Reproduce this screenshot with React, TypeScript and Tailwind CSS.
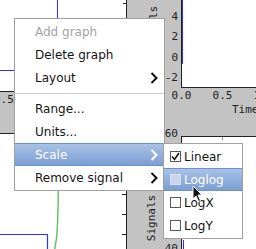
import React from "react";

function Chevron({ white }: { white?: boolean }) {
    return (
        <svg width="8" height="12" viewBox="0 0 8 12" className="ml-auto mr-[6px]">
            <polyline points="1.5,1 6.5,6 1.5,11" fill="none" stroke={white ? "#ffffff" : "#111111"} strokeWidth="2" />
        </svg>
    );
}

function Item({ label, disabled, active, sub }: { label: string; disabled?: boolean; active?: boolean; sub?: boolean }) {
    return (
        <div
            className={
                "h-[23px] flex items-center pl-[20px] " +
                (active
                    ? "bg-gradient-to-b from-[#a9c2e6] to-[#7b9fd4] text-white border-y border-[#6d92c9]"
                    : disabled
                        ? "text-[#a3a3a3]"
                        : "text-[#141414]")
            }
        >
            {label}
            {sub && <Chevron white={active} />}
        </div>
    );
}

function Check({ label, checked, active }: { label: string; checked?: boolean; active?: boolean }) {
    return (
        <div
            className={
                "h-[23px] flex items-center pl-[6px] gap-[3px] " +
                (active
                    ? "bg-gradient-to-b from-[#a9c2e6] to-[#7b9fd4] text-white border-y border-[#6d92c9]"
                    : "text-[#141414]")
            }
        >
            <div
                className={
                    "w-[11px] h-[11px] border flex items-center justify-center " +
                    (active ? "border-[#d8e2f2] bg-[#c9d6ec]" : "border-[#5a5a5a] bg-white")
                }
            >
                {checked && (
                    <svg width="9" height="9" viewBox="0 0 9 9">
                        <polyline points="1,4.5 3.5,7.5 8,1" fill="none" stroke="#111" strokeWidth="1.6" />
                    </svg>
                )}
            </div>
            <span>{label}</span>
        </div>
    );
}

function YLabels({ values }: { values: string[] }) {
    return (
        <div className="flex flex-col items-end pr-[3px] pt-[7px]">
            {values.map((v) => (
                <div key={v} className="h-[23px] flex items-center">
                    <span>{v}</span>
                </div>
            ))}
        </div>
    );
}

export default function App() {
    return (
        <div className="relative w-[256px] h-[249px] overflow-hidden bg-[#c3c3c3] flex font-['DejaVu_Sans_Mono',monospace] text-[11px] leading-[14px] text-[#222]">
            {/* left column of graphs */}
            <div className="w-[127px] flex flex-col">
                <div className="h-[92px] bg-white border-r border-b border-[#222]">
                    <svg width="126" height="91">
                        <line x1="57.5" y1="0" x2="57.5" y2="30" stroke="#2b2bff" />
                        <line x1="0" y1="70.5" x2="30" y2="70.5" stroke="#2b2bff" />
                        <line x1="123" y1="3.5" x2="126" y2="3.5" stroke="#222" />
                    </svg>
                </div>
                <div className="h-[42px] pt-[1px] ml-[-6px]">0.5</div>
                <div className="flex-1 bg-white border-t border-r border-[#222]">
                    <svg width="126" height="115">
                        <polyline points="0,100.5 47.5,100.5 47.5,120" fill="none" stroke="#3030ff" strokeWidth="1.2" />
                        <path d="M58.5,40 C58.2,80 57.6,95 56.5,104 C55.8,110 55,113 54,120" fill="none" stroke="#5fbf5f" strokeWidth="1.4" />
                        <line x1="122" y1="60.5" x2="126" y2="60.5" stroke="#222" />
                        <line x1="122" y1="80.5" x2="126" y2="80.5" stroke="#222" />
                        <line x1="122" y1="100.5" x2="126" y2="100.5" stroke="#222" />
                    </svg>
                </div>
            </div>

            {/* right column of graphs */}
            <div className="flex-1 flex flex-col">
                <div className="h-[88px] flex">
                    <div className="relative w-[54px] flex justify-end">
                        <span className="absolute left-[3px] top-[22px] w-[47px] -rotate-90 text-center">Signals</span>
                        <YLabels values={["4", "2", "0", "-2"]} />
                    </div>
                    <div className="flex-1 bg-white border-l border-b border-[#222]">
                        <div className="w-[1px] h-[64px] bg-[#2b2bff]" />
                    </div>
                </div>
                <div className="h-[48px] flex flex-col">
                    <div className="flex pl-[34px] pt-[1px]">
                        <span className="w-[41px] text-center">0.0</span>
                        <span className="w-[41px] text-center">0.5</span>
                        <span className="w-[41px] text-center">1.0</span>
                    </div>
                    <div className="pl-[105px] whitespace-nowrap">Time</div>
                    <div className="w-[51px] text-right mt-[10px]">60</div>
                </div>
                <div className="flex-1 flex">
                    <div className="relative w-[54px]">
                        <span className="absolute left-[1px] top-[75px] w-[47px] -rotate-90 text-center">Signals</span>
                        <span className="absolute right-[3px] top-[106px]">40</span>
                    </div>
                    <div className="flex-1 flex flex-col bg-white border-l border-t border-[#222]">
                        <div className="ml-[40px] w-[1px] h-[3px] bg-[#999]" />
                        <div className="ml-[1px] mt-[100px] w-[1px] h-[20px] bg-[#2b2bff]" />
                    </div>
                </div>
            </div>

            {/* context menu */}
            <div className="absolute left-[14px] top-[18px] w-[151px] py-[1px] bg-white border border-[#a0a0a0] font-['DejaVu_Sans',sans-serif] text-[12px]">
                <Item label="Add graph" disabled />
                <Item label="Delete graph" />
                <Item label="Layout" sub />
                <div className="h-[8px] flex items-center">
                    <div className="w-full h-[1px] bg-[#cfcfcf]" />
                </div>
                <Item label="Range..." />
                <Item label="Units..." />
                <Item label="Scale" active sub />
                <Item label="Remove signal" sub />
            </div>

            {/* scale submenu */}
            <div className="absolute left-[163px] top-[143px] w-[80px] py-[1px] bg-white border border-[#a0a0a0] font-['DejaVu_Sans',sans-serif] text-[12px]">
                <Check label="Linear" checked />
                <Check label="Loglog" active />
                <Check label="LogX" />
                <Check label="LogY" />
            </div>

            {/* mouse pointer */}
            <svg width="12" height="18" viewBox="0 0 12 18" className="absolute left-[192px] top-[185px]">
                <path d="M1,1 L1,14 L4,11 L6.5,16.5 L8.5,15.5 L6,10 L10,10 Z" fill="#111" stroke="#fff" strokeWidth="1" strokeLinejoin="round" />
            </svg>
        </div>
    );
}
